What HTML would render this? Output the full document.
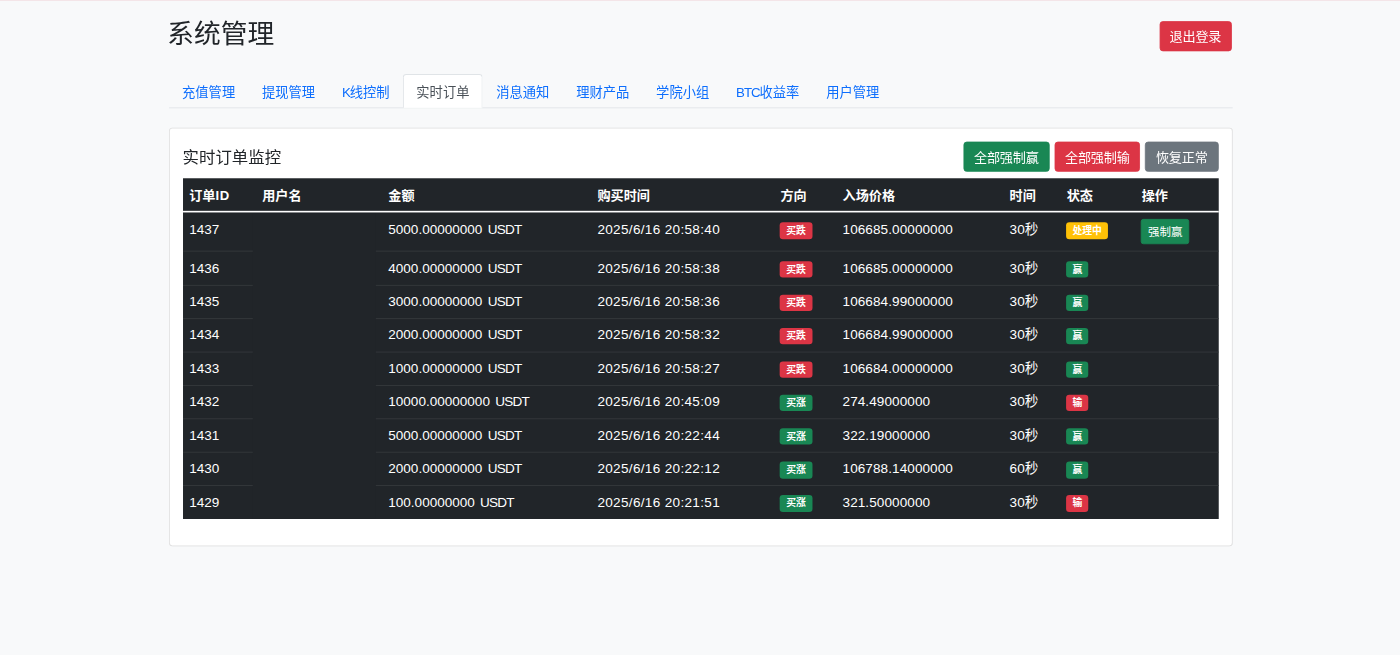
<!DOCTYPE html>
<html lang="zh-CN">
<head>
<meta charset="utf-8">
<title>系统管理</title>
<style>
*,*::before,*::after{box-sizing:border-box}
html,body{margin:0;padding:0}
html{background:#f8f9fa}
body{width:1400px;height:655px;overflow:hidden;background:#f8f9fa;position:relative}
#topline{position:absolute;left:0;top:0;width:1400px;height:1px;background:#f4e5e8;z-index:5}
#wrap{width:1707px;transform:translate(0px,0) scale(0.8207,0.814);transform-origin:0 0;
  font-family:"Liberation Sans","Noto Sans CJK SC",sans-serif;font-size:16px;line-height:1.5;color:#212529;
  padding-top:20.7px}
.container{width:1320px;margin:0 auto;padding:0 12px}
.head{display:flex;justify-content:space-between;align-items:center;margin-bottom:24.3px}
h2{font-size:32.6px;font-weight:400;line-height:38.4px;margin:0 0 8px 0;position:relative;top:2.6px;left:-1.6px}
h5{font-size:20px;font-weight:400;line-height:1.2;margin:0}
.btn{display:inline-block;font-weight:400;line-height:1.5;color:#fff;text-align:center;vertical-align:middle;
  border:1px solid transparent;padding:6.8px 12px 4.8px;font-size:16px;border-radius:4px;font-family:inherit;white-space:nowrap;letter-spacing:-.25px}
.btn-sm{padding:4.8px 7.5px 3.2px;letter-spacing:0;font-size:14px;border-radius:3.2px}
.btn-danger{background:#dc3545;border-color:#dc3545}
.btn-success{background:#198754;border-color:#198754}
.btn-secondary{background:#6c757d;border-color:#6c757d}
.me-2{margin-right:6.1px}
.nav{display:flex;flex-wrap:wrap;list-style:none;margin:0 0 24px 0;padding:0;border-bottom:1px solid #dee2e6}
.nav a{display:block;font-size:16.2px;line-height:24px;padding:8.3px 0 7.2px;width:97.4px;text-align:center;white-space:nowrap;color:#0d6efd;text-decoration:none;margin-bottom:-1px;
  border:1px solid transparent;border-top-left-radius:4px;border-top-right-radius:4px}
.nav a.active{color:#495057;background:#fff;border-color:#dee2e6 #dee2e6 #fff}
.card{background:#fff;border:1px solid rgba(0,0,0,.125);border-radius:4px}
.card-body{padding:16px 16px 16.2px}
.bar{display:flex;justify-content:space-between;align-items:center;margin-bottom:8px}
.tw{position:relative;background:#212529;margin:0 0 16px 0}
table{width:100%;border-collapse:collapse;margin:0;color:#fff;table-layout:fixed}
th,td{padding:8.5px 8px 7.5px;text-align:left;vertical-align:top;border-bottom:1px solid transparent;line-height:24px}
th{font-weight:700;vertical-align:bottom;padding:9.2px 8px 6.8px}
tbody{border-top:2px solid transparent}
.ln{position:absolute;left:0;width:100%;height:1px;background:#373b3e}
.wl{position:absolute;left:0;width:100%;top:40px;height:2px;background:#fff}
.red{position:absolute;left:85.4px;width:149.8px;top:43px;bottom:1px;background:#212529}
.badge{display:inline-block;position:relative;top:.6px;padding:4.1px 7.5px;margin-left:-.5px;font-size:12px;font-weight:700;line-height:1;color:#fff;
  text-align:center;white-space:nowrap;vertical-align:baseline;border-radius:4px}
.lt{letter-spacing:-1.3px}
td:nth-child(1),td:nth-child(3),td:nth-child(7){font-size:16.5px}
td:nth-child(4){font-size:16.5px;letter-spacing:.4px}
td:nth-child(6){font-size:16.5px;letter-spacing:.1px}
tbody tr:not(:first-child) td{padding-top:7.75px;padding-bottom:8.3px}
tbody tr:not(:first-child) .badge{top:.95px}
td:nth-child(9){padding:8px 8px 8px 7.4px}
.us{letter-spacing:-.95px;margin-left:1.8px}
.bg-danger{background:#dc3545}
.bg-success{background:#198754}
.bg-warning{background:#ffc107}
</style>
</head>
<body>
<div id="topline"></div>
<div id="wrap">
<div class="container">
  <div class="head">
    <h2>系统管理</h2>
    <span class="btn btn-danger" style="padding:6.3px 11.55px 4.4px;margin-right:.9px;position:relative;top:.45px">退出登录</span>
  </div>
  <div class="nav">
    <a>充值管理</a><a>提现管理</a><a style="width:90.7px"><span class="lt">K</span>线控制</a><a class="active">实时订单</a><a>消息通知</a><a>理财产品</a><a>学院小组</a><a style="width:109.8px"><span class="lt">BTC</span>收益率</a><a>用户管理</a>
  </div>
  <div class="card">
    <div class="card-body">
      <div class="bar">
        <h5>实时订单监控</h5>
        <div><span class="btn btn-success me-2">全部强制赢</span><span class="btn btn-danger me-2">全部强制输</span><span class="btn btn-secondary">恢复正常</span></div>
      </div>
      <div class="tw"><table>
        <colgroup>
          <col style="width:89px"><col style="width:153.6px"><col style="width:254.8px"><col style="width:223.1px"><col style="width:75.6px"><col style="width:203.6px"><col style="width:69.5px"><col style="width:91.4px"><col>
        </colgroup>
        <thead>
          <tr><th>订单<span style="letter-spacing:.7px">ID</span></th><th>用户名</th><th>金额</th><th>购买时间</th><th>方向</th><th>入场价格</th><th>时间</th><th>状态</th><th>操作</th></tr>
        </thead>
        <tbody>
          <tr><td>1437</td><td></td><td>5000.00000000 <span class="us">USDT</span></td><td>2025/6/16 20:58:40</td><td><span class="badge bg-danger">买跌</span></td><td>106685.00000000</td><td>30秒</td><td><span class="badge bg-warning">处理中</span></td><td><span class="btn btn-sm btn-success">强制赢</span></td></tr>
          <tr><td>1436</td><td></td><td>4000.00000000 <span class="us">USDT</span></td><td>2025/6/16 20:58:38</td><td><span class="badge bg-danger">买跌</span></td><td>106685.00000000</td><td>30秒</td><td><span class="badge bg-success">赢</span></td><td></td></tr>
          <tr><td>1435</td><td></td><td>3000.00000000 <span class="us">USDT</span></td><td>2025/6/16 20:58:36</td><td><span class="badge bg-danger">买跌</span></td><td>106684.99000000</td><td>30秒</td><td><span class="badge bg-success">赢</span></td><td></td></tr>
          <tr><td>1434</td><td></td><td>2000.00000000 <span class="us">USDT</span></td><td>2025/6/16 20:58:32</td><td><span class="badge bg-danger">买跌</span></td><td>106684.99000000</td><td>30秒</td><td><span class="badge bg-success">赢</span></td><td></td></tr>
          <tr><td>1433</td><td></td><td>1000.00000000 <span class="us">USDT</span></td><td>2025/6/16 20:58:27</td><td><span class="badge bg-danger">买跌</span></td><td>106684.00000000</td><td>30秒</td><td><span class="badge bg-success">赢</span></td><td></td></tr>
          <tr><td>1432</td><td></td><td>10000.00000000 <span class="us">USDT</span></td><td>2025/6/16 20:45:09</td><td><span class="badge bg-success">买涨</span></td><td>274.49000000</td><td>30秒</td><td><span class="badge bg-danger">输</span></td><td></td></tr>
          <tr><td>1431</td><td></td><td>5000.00000000 <span class="us">USDT</span></td><td>2025/6/16 20:22:44</td><td><span class="badge bg-success">买涨</span></td><td>322.19000000</td><td>30秒</td><td><span class="badge bg-success">赢</span></td><td></td></tr>
          <tr><td>1430</td><td></td><td>2000.00000000 <span class="us">USDT</span></td><td>2025/6/16 20:22:12</td><td><span class="badge bg-success">买涨</span></td><td>106788.14000000</td><td>60秒</td><td><span class="badge bg-success">赢</span></td><td></td></tr>
          <tr><td>1429</td><td></td><td>100.00000000 <span class="us">USDT</span></td><td>2025/6/16 20:21:51</td><td><span class="badge bg-success">买涨</span></td><td>321.50000000</td><td>30秒</td><td><span class="badge bg-danger">输</span></td><td></td></tr>
        </tbody>
      </table><div class="wl"></div><div class="ln" style="top:89px"></div><div class="ln" style="top:130.05px"></div><div class="ln" style="top:171.1px"></div><div class="ln" style="top:212.15px"></div><div class="ln" style="top:253.2px"></div><div class="ln" style="top:294.25px"></div><div class="ln" style="top:335.3px"></div><div class="ln" style="top:376.35px"></div><div class="red"></div></div>
    </div>
  </div>
</div>
</div>
</body>
</html>
